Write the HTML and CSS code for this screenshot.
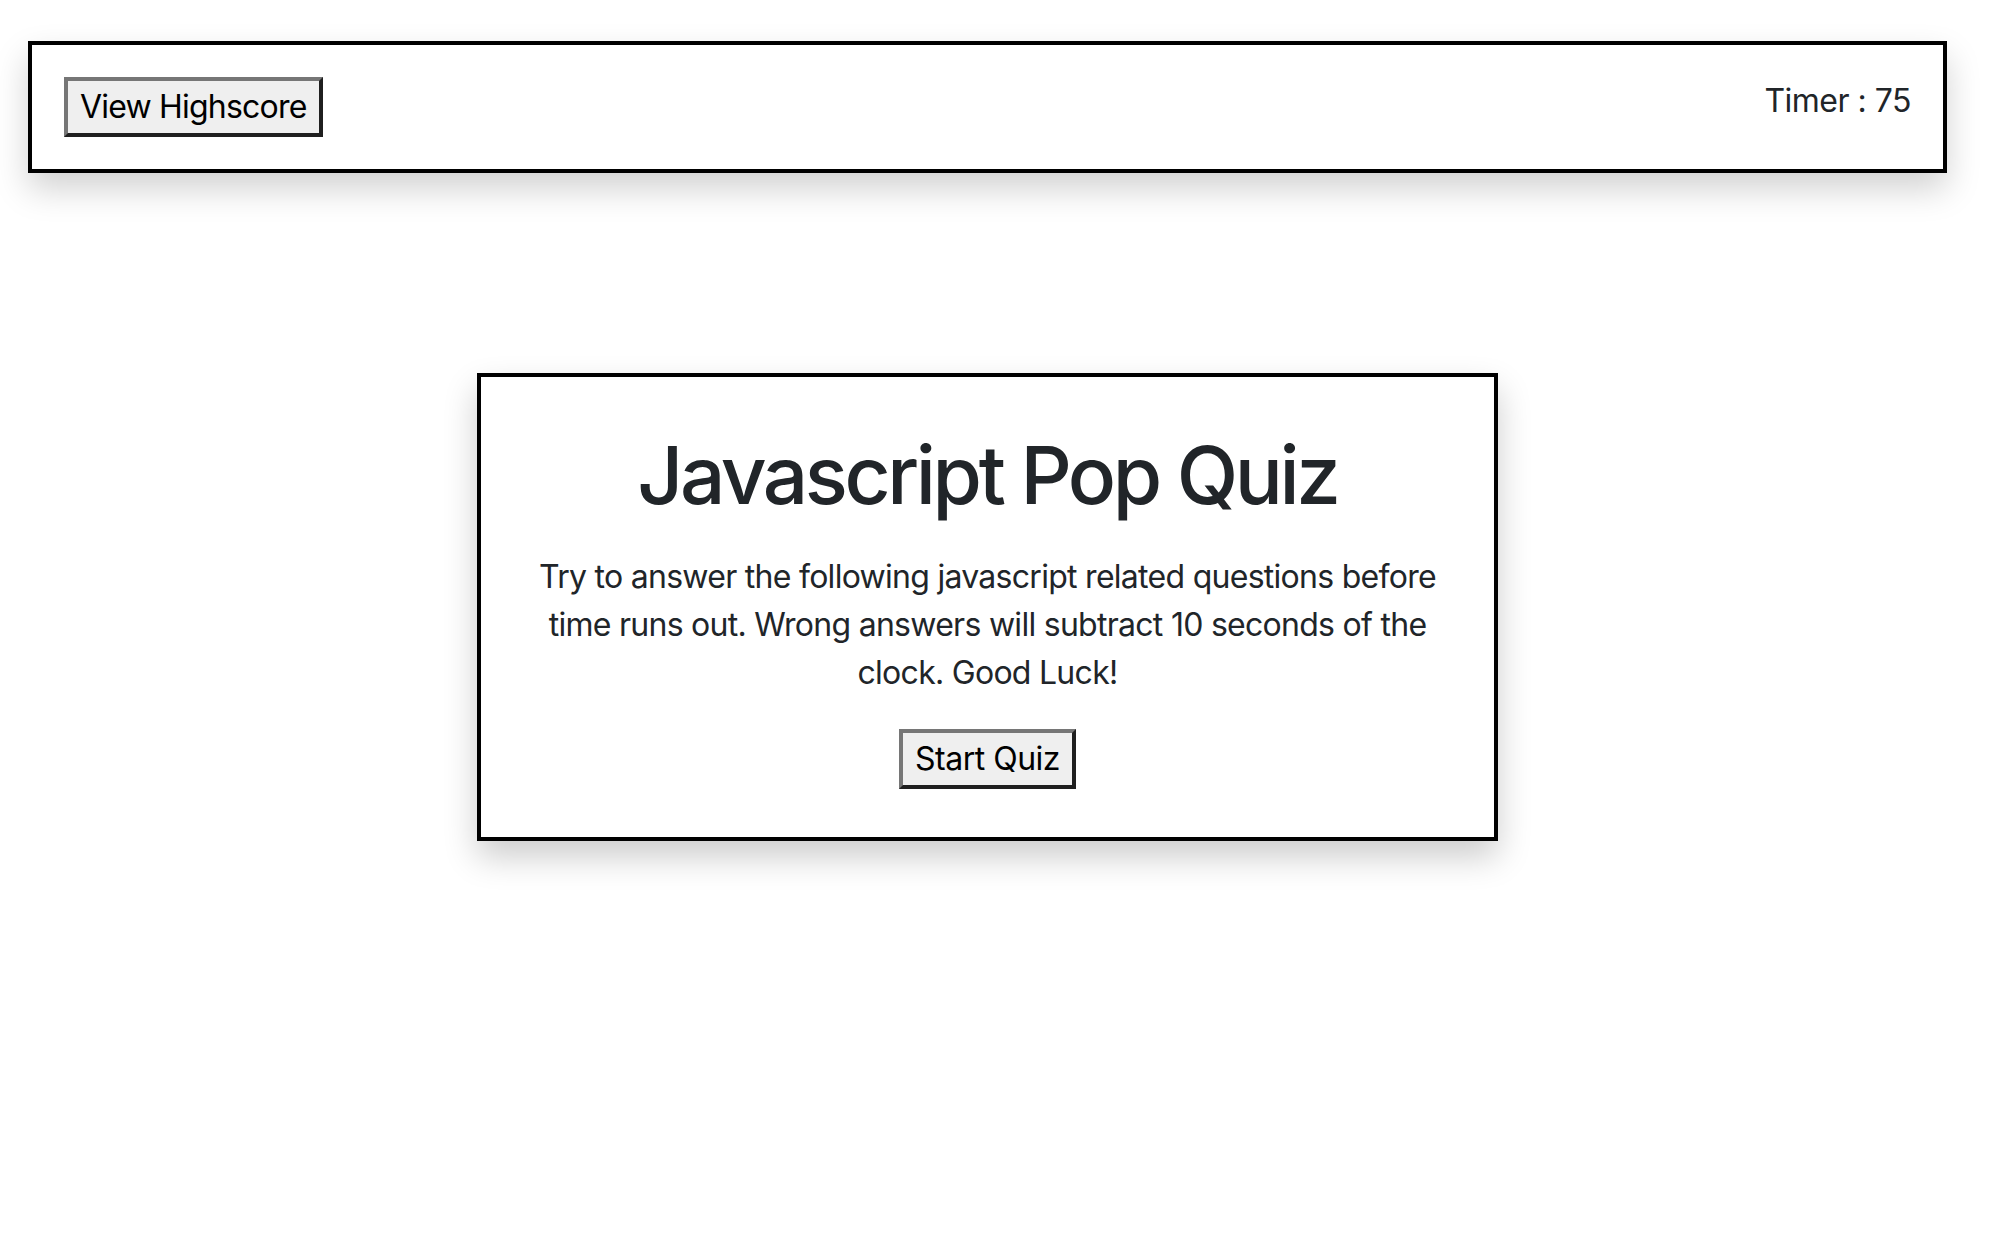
FILE: index.html
```html
<!DOCTYPE html>
<html lang="en">
<head>
<meta charset="utf-8">
<title>Javascript Pop Quiz</title>
<link rel="stylesheet" href="styles.css">
</head>
<body>
<div class="page">
  <header class="topbar">
    <button class="btn btn-highscore" type="button">View Highscore</button>
    <div class="timer">Timer : 75</div>
  </header>
  <main class="card">
    <h1 class="title">Javascript Pop Quiz</h1>
    <p class="intro">Try to answer the following javascript related questions before time runs out. Wrong answers will subtract 10 seconds of the clock. Good Luck!</p>
    <button class="btn btn-start" type="button">Start Quiz</button>
  </main>
</div>
</body>
</html>
```

FILE: styles.css
```css
html, body {
  margin: 0;
  padding: 0;
  background: #ffffff;
}

body {
  font-family: Inter, "Noto Sans", "Liberation Sans", sans-serif;
  font-size: 32px;
  line-height: 48px;
  color: #212529;
}

.page {
  margin-right: 14px;
  padding-top: 41px;
  padding-bottom: 160px;
}

.topbar {
  margin: 0 28px;
  padding: 32px;
  border: 4px solid #000;
  display: flex;
  justify-content: space-between;
  align-items: flex-start;
  background: #fff;
  box-shadow: 0 16px 32px rgba(0, 0, 0, 0.18);
  box-sizing: border-box;
  height: 132px;
}

.timer {
  line-height: 48px;
  letter-spacing: -0.5px;
}

.btn {
  font-family: Inter, "Noto Sans", "Liberation Sans", sans-serif;
  font-size: 32px;
  line-height: 48px;
  color: #000;
  background: #efefef;
  padding: 2px 12px;
  border-width: 4px;
  border-style: solid;
  border-color: #767676 #1f1f1f #1f1f1f #767676;
  border-radius: 0;
  margin: 0;
  cursor: pointer;
}

.btn-highscore {
  letter-spacing: -0.8px;
}

.btn-start {
  letter-spacing: -0.5px;
}

.card {
  width: 1021px;
  box-sizing: border-box;
  margin: 200px auto 0;
  border: 4px solid #000;
  padding: 50px 48px 48px;
  text-align: center;
  background: #fff;
  box-shadow: 0 16px 32px rgba(0, 0, 0, 0.2);
}

.title {
  margin: 0 0 30px;
  font-size: 80px;
  line-height: 96px;
  font-weight: 500;
  letter-spacing: -3.4px;
  color: #212529;
}

.intro {
  margin: 0 0 32px;
  letter-spacing: -0.72px;
}
```
